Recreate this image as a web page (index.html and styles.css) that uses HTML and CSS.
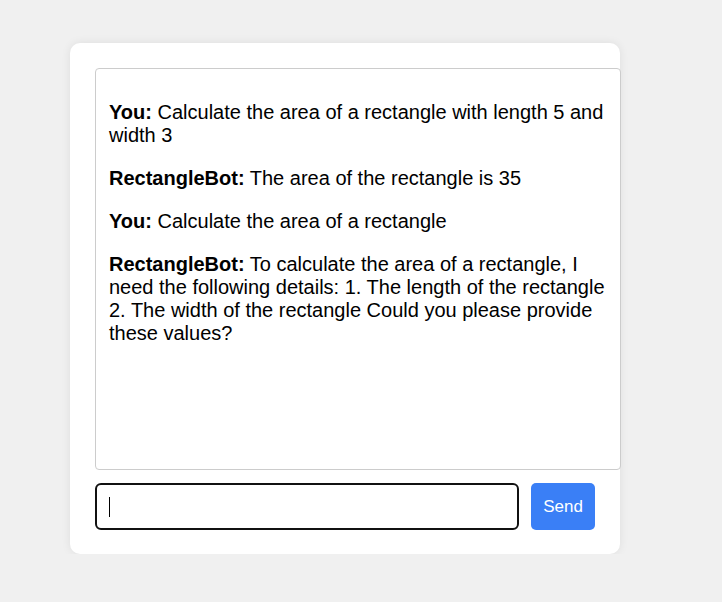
FILE: index.html
```html
<!DOCTYPE html>
<html>
<head>
<meta charset="utf-8">
<link rel="stylesheet" href="styles.css">
</head>
<body>
<div class="card">
  <div class="chat">
    <p><strong>You:</strong> Calculate the area of a rectangle with length 5 and width 3</p>
    <p><strong>RectangleBot:</strong> The area of the rectangle is 35</p>
    <p><strong>You:</strong> Calculate the area of a rectangle</p>
    <p><strong>RectangleBot:</strong> To calculate the area of a rectangle, I need the following details: 1. The length of the rectangle 2. The width of the rectangle Could you please provide these values?</p>
  </div>
  <div class="row">
    <div class="input"><span class="caret"></span></div>
    <button class="send">Send</button>
  </div>
</div>
</body>
</html>
```
FILE: styles.css
```css
html, body { margin: 0; padding: 0; }
body {
  background: #f0f0f0;
  font-family: "Liberation Sans", Arial, sans-serif;
  padding: 43px 0 0 70px;
}
.card {
  width: 500px;
  padding: 25px 25px 24px;
  background: #fff;
  border-radius: 10px;
  box-shadow: 0 0 10px rgba(0,0,0,0.08);
}
.chat {
  width: 500px;
  height: 376px;
  padding: 12px 11px 12px 13px;
  border: 1px solid #ccc;
  border-radius: 4px;
  font-size: 20px;
  color: #000;
  overflow: hidden;
}
.chat p { margin: 20px 0; }
.row {
  display: flex;
  gap: 12px;
  margin-top: 13px;
}
.input {
  flex: 1;
  height: 43px;
  border: 2px solid #111;
  border-radius: 6px;
  display: flex;
  align-items: center;
  padding-left: 12px;
}
.caret {
  width: 1px;
  height: 20px;
  background: #000;
}
.send {
  width: 64px;
  height: 47px;
  border: none;
  border-radius: 5px;
  background: #3a7ff6;
  color: #fff;
  font-family: "Liberation Sans", Arial, sans-serif;
  font-size: 17px;
  padding: 0;
}
```
